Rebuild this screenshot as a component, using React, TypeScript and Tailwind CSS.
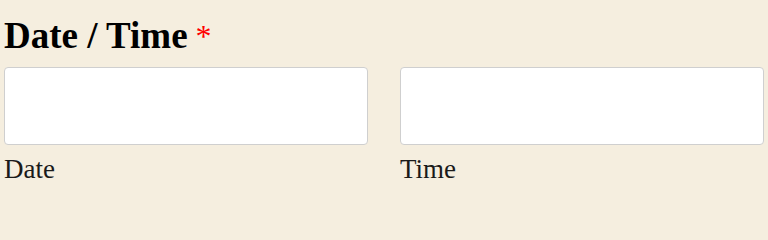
export default function App() {
  return (
    <div className="min-h-screen bg-[#f5eedf] px-[4px] pt-[14px] font-['Liberation_Serif',serif] text-black">
      <h2 className="flex items-start text-[37px] font-bold leading-[44px]">
        <span>Date / Time</span>
        <span className="ml-[8px] mt-[6px] text-[32px] font-normal leading-[32px] text-[#ff0000]">*</span>
      </h2>
      <div className="mt-[9px] grid grid-cols-[364px_364px] gap-x-[32px]">
        <div className="flex flex-col">
          <input
            type="text"
            className="h-[78px] w-full rounded-[4px] border border-[#cfcfcf] bg-white outline-none"
          />
          <label className="mt-[8px] text-[27px] leading-[32px] text-[#1a1a1a]">Date</label>
        </div>
        <div className="flex flex-col">
          <input
            type="text"
            className="h-[78px] w-full rounded-[4px] border border-[#cfcfcf] bg-white outline-none"
          />
          <label className="mt-[8px] text-[27px] leading-[32px] text-[#1a1a1a]">Time</label>
        </div>
      </div>
    </div>
  );
}
